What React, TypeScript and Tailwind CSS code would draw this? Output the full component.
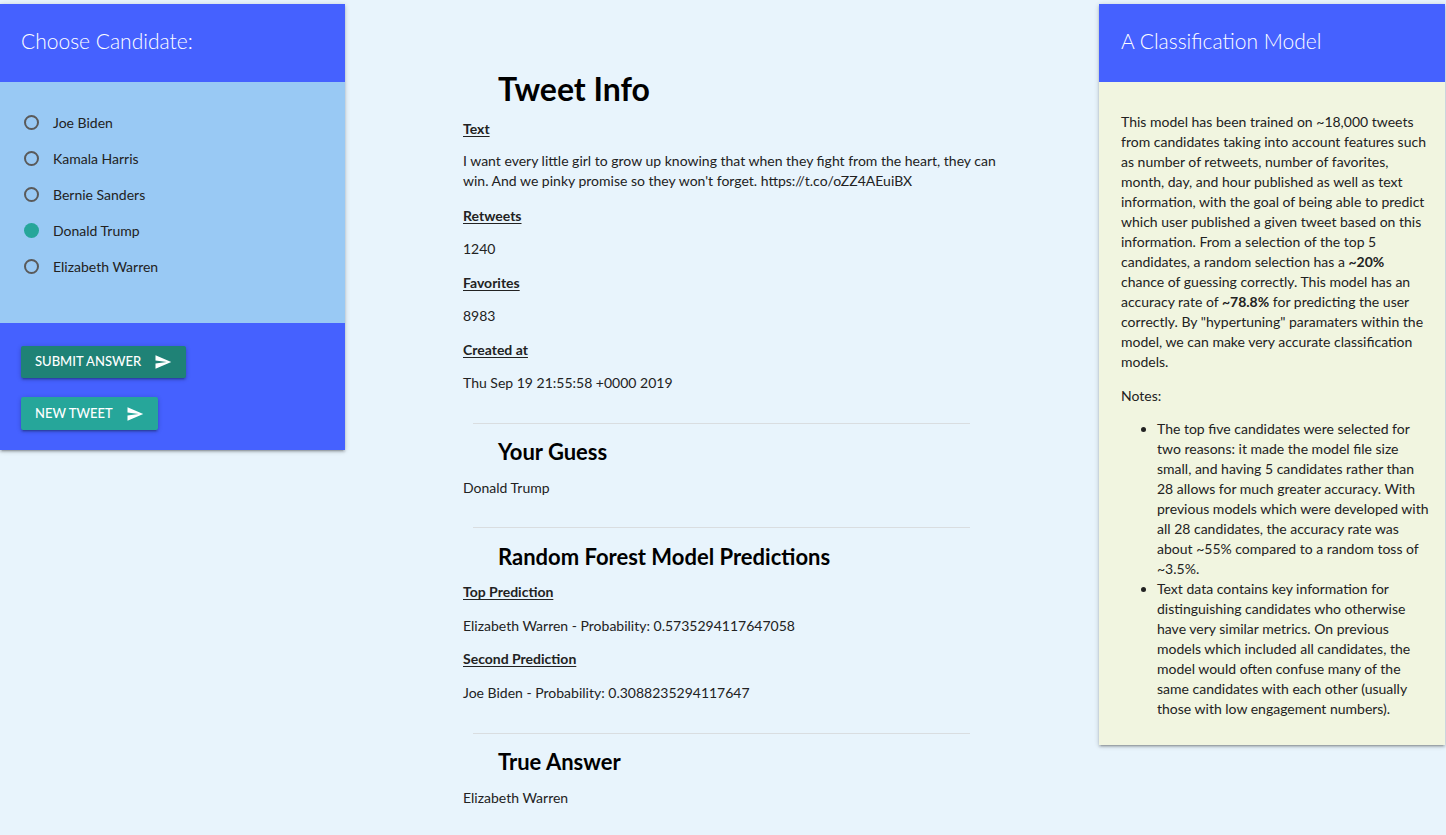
import React from "react";

const FONT = { fontFamily: 'Lato, "Noto Sans", sans-serif' };

function SendIcon() {
  return (
    <svg width="18" height="18" viewBox="0 0 24 24" fill="white">
      <path d="M2.01 21L23 12 2.01 3 2 10l15 2-15 2z" />
    </svg>
  );
}

const candidates = ["Joe Biden", "Kamala Harris", "Bernie Sanders", "Donald Trump", "Elizabeth Warren"];

function Label({ children, className = "" }: { children: React.ReactNode; className?: string }) {
  return <div className={"h-5 leading-5 font-bold underline underline-offset-2 text-[#222] " + className}>{children}</div>;
}

function Val({ children, className = "" }: { children: React.ReactNode; className?: string }) {
  return <div className={"leading-5 text-[#222] " + className}>{children}</div>;
}

function Lines({ lines }: { lines: React.ReactNode[] }) {
  return (
    <>
      {lines.map((l, i) => (
        <span key={i} className="block whitespace-nowrap">
          {l}
        </span>
      ))}
    </>
  );
}

const intro: React.ReactNode[] = [
  "This model has been trained on ~18,000 tweets",
  "from candidates taking into account features such",
  "as number of retweets, number of favorites,",
  "month, day, and hour published as well as text",
  "information, with the goal of being able to predict",
  "which user published a given tweet based on this",
  "information. From a selection of the top 5",
  <>candidates, a random selection has a <b className="font-bold">~20%</b></>,
  "chance of guessing correctly. This model has an",
  <>accuracy rate of <b className="font-bold">~78.8%</b> for predicting the user</>,
  'correctly. By "hypertuning" paramaters within the',
  "model, we can make very accurate classification",
  "models.",
];

const note1 = [
  "The top five candidates were selected for",
  "two reasons: it made the model file size",
  "small, and having 5 candidates rather than",
  "28 allows for much greater accuracy. With",
  "previous models which were developed with",
  "all 28 candidates, the accuracy rate was",
  "about ~55% compared to a random toss of",
  "~3.5%.",
];

const note2 = [
  "Text data contains key information for",
  "distinguishing candidates who otherwise",
  "have very similar metrics. On previous",
  "models which included all candidates, the",
  "model would often confuse many of the",
  "same candidates with each other (usually",
  "those with low engagement numbers).",
];

const shadow =
  "shadow-[0_2px_2px_0_rgba(0,0,0,0.14),0_3px_1px_-2px_rgba(0,0,0,0.12),0_1px_5px_0_rgba(0,0,0,0.2)]";

export default function App() {
  return (
    <div style={FONT} className="w-[1446px] h-[835px] bg-[#e8f4fc] text-[14px] text-[#222] flex items-start overflow-hidden">
      {/* Left card */}
      <div className={"w-[345px] mt-[4px] shrink-0 " + shadow}>
        <div className="h-[78px] bg-[#4561ff] flex items-center pl-[21px] pb-[5px]">
          <span className="text-white text-[21px] font-light">Choose Candidate:</span>
        </div>
        <div className="h-[241px] bg-[#99c9f4] pt-[30px] flex flex-col gap-[16px]">
          {candidates.map((c) => {
            const checked = c === "Donald Trump";
            return (
              <div key={c} className="h-5 flex items-center pl-[24px]">
                {checked ? (
                  <span className="w-[15px] h-[15px] rounded-full bg-[#26a69a]" />
                ) : (
                  <span className="w-[15px] h-[15px] rounded-full border-2 border-[#5a5a5a]" />
                )}
                <span className="ml-[14px] text-[14px] text-[#222]">{c}</span>
              </div>
            );
          })}
        </div>
        <div className="h-[127px] bg-[#4561ff] pl-[21px] pt-[23px] flex flex-col items-start gap-[19px]">
          <button className={"h-[32px] pl-[14px] pr-[14px] bg-[#1f8276] text-white text-[13px] font-medium flex items-center gap-[13px] rounded-[2px] " + shadow}>
            SUBMIT ANSWER <SendIcon />
          </button>
          <button className={"h-[33px] pl-[14px] pr-[14px] bg-[#26a69a] text-white text-[13px] font-medium flex items-center gap-[13px] rounded-[2px] " + shadow}>
            NEW TWEET <SendIcon />
          </button>
        </div>
      </div>

      {/* Middle */}
      <div className="flex-1 pl-[118px]">
        <div className="w-[545px] flex flex-col">
          <h1 className="mt-[69px] h-[40px] leading-[40px] pl-[35px] text-[32px] font-bold text-black">Tweet Info</h1>
          <Label className="mt-[10px]">Text</Label>
          <Val className="mt-[12px]">
            <Lines
              lines={[
                "I want every little girl to grow up knowing that when they fight from the heart, they can",
                "win. And we pinky promise so they won't forget. https://t.co/oZZ4AEuiBX",
              ]}
            />
          </Val>
          <Label className="mt-[15px]">Retweets</Label>
          <Val className="mt-[13px]">1240</Val>
          <Label className="mt-[14px]">Favorites</Label>
          <Val className="mt-[13px]">8983</Val>
          <Label className="mt-[14px]">Created at</Label>
          <Val className="mt-[13px]">Thu Sep 19 21:55:58 +0000 2019</Val>

          <div className="mt-[30px] ml-[10px] w-[497px] h-px bg-[#d9dde0]" />
          <h2 className="mt-[14px] h-[28px] leading-[28px] pl-[35px] text-[22px] font-bold text-black">Your Guess</h2>
          <Val className="mt-[12px]">Donald Trump</Val>

          <div className="mt-[29px] ml-[10px] w-[497px] h-px bg-[#d9dde0]" />
          <h2 className="mt-[15px] h-[28px] leading-[28px] pl-[35px] text-[22px] font-bold text-black">Random Forest Model Predictions</h2>
          <Label className="mt-[11px]">Top Prediction</Label>
          <Val className="mt-[14px]">Elizabeth Warren - Probability: 0.5735294117647058</Val>
          <Label className="mt-[13px]">Second Prediction</Label>
          <Val className="mt-[14px]">Joe Biden - Probability: 0.3088235294117647</Val>

          <div className="mt-[30px] ml-[10px] w-[497px] h-px bg-[#d9dde0]" />
          <h2 className="mt-[14px] h-[28px] leading-[28px] pl-[35px] text-[22px] font-bold text-black">True Answer</h2>
          <Val className="mt-[12px]">Elizabeth Warren</Val>
        </div>
      </div>

      {/* Right card */}
      <div className={"w-[346px] mt-[4px] mr-[1px] shrink-0 " + shadow}>
        <div className="h-[78px] bg-[#4561ff] flex items-center pl-[22px] pb-[5px]">
          <span className="text-white text-[21px] font-light">A Classification Model</span>
        </div>
        <div className="bg-[#f1f5e0] pt-[30px] pb-[26px] px-[22px] leading-5 text-[#222]">
          <p>
            <Lines lines={intro} />
          </p>
          <p className="mt-[14px]">Notes:</p>
          <ul className="mt-[13px] pl-[36px] list-disc">
            <li>
              <Lines lines={note1} />
            </li>
            <li>
              <Lines lines={note2} />
            </li>
          </ul>
        </div>
      </div>
    </div>
  );
}
